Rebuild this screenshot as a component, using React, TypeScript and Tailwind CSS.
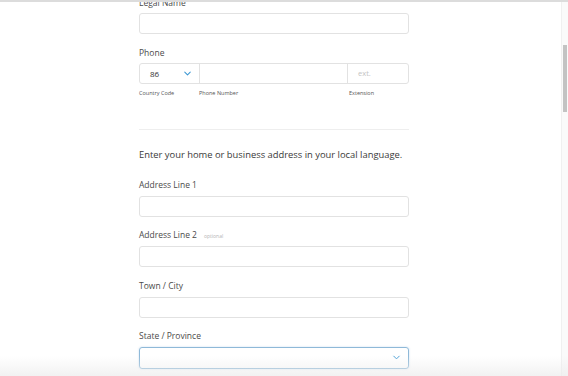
import { ChevronDown } from "lucide-react";

const Label = ({ children }: { children: React.ReactNode }) => (
  <div className="text-[8.5px] leading-[10px] text-[#4a4a4a]">{children}</div>
);

const Input = () => (
  <div className="h-[21px] w-full rounded-[3px] border border-[#e2e2e2] bg-white" />
);

const App = () => {
  return (
    <div className="relative flex h-[376px] w-[568px] overflow-hidden border-t-2 border-[#dcdcdc] bg-white [font-family:'Open_Sans',sans-serif]">
      <div className="flex flex-1 justify-start pl-[139px]">
        <div className="-mt-[4px] flex w-[270px] flex-col">
          <Label>Legal Name</Label>
          <div className="mt-[5px]">
            <Input />
          </div>

          <div className="mt-[14px]">
            <Label>Phone</Label>
          </div>
          <div className="mt-[5px] flex h-[21px] rounded-[3px] border border-[#e2e2e2]">
            <div className="flex w-[60px] items-center justify-between border-r border-[#e2e2e2] pl-[10px] pr-[6px]">
              <span className="text-[8px] text-[#333]">86</span>
              <ChevronDown className="h-[11px] w-[11px] text-[#3b97d3]" strokeWidth={2.2} />
            </div>
            <div className="flex-1 border-r border-[#e2e2e2]" />
            <div className="flex w-[60px] items-center pl-[10px] text-[7.5px] text-[#c4c4c4]">ext.</div>
          </div>
          <div className="mt-[5px] flex text-[5.5px] text-[#555]">
            <span className="w-[60px]">Country Code</span>
            <span className="flex-1">Phone Number</span>
            <span className="w-[60px]">Extension</span>
          </div>

          <div className="mt-[32px] h-px bg-[#eeeeee]" />

          <p className="mt-[19px] whitespace-nowrap text-[9.4px] leading-[12px] text-[#3a3a3a]">
            Enter your home or business address in your local language.
          </p>

          <div className="mt-[19px]">
            <Label>Address Line 1</Label>
          </div>
          <div className="mt-[6px]">
            <Input />
          </div>

          <div className="mt-[13px] flex items-baseline gap-[7px]">
            <Label>Address Line 2</Label>
            <span className="text-[5px] text-[#b5b5b5]">optional</span>
          </div>
          <div className="mt-[5px]">
            <Input />
          </div>

          <div className="mt-[14px]">
            <Label>Town / City</Label>
          </div>
          <div className="mt-[6px]">
            <Input />
          </div>

          <div className="mt-[13px]">
            <Label>State / Province</Label>
          </div>
          <div className="mt-[6px] flex h-[22px] items-center justify-end rounded-[3px] border border-[#8fb9d8] pr-[6px] shadow-[0_0_2px_rgba(80,150,210,0.35)]">
            <ChevronDown className="h-[11px] w-[11px] text-[#3b97d3]" strokeWidth={2} />
          </div>
        </div>
      </div>

      <div className="flex w-[7px] flex-col border-l border-[#f0f0f0] bg-[#fafafa] pt-[43px]">
        <div className="ml-[1px] h-[67px] w-[4px] bg-[#c3c3c3]" />
      </div>

      <div className="pointer-events-none absolute bottom-0 left-0 h-[20px] w-full bg-gradient-to-b from-transparent to-[#ececec]/70" />
    </div>
  );
};

export default App;
